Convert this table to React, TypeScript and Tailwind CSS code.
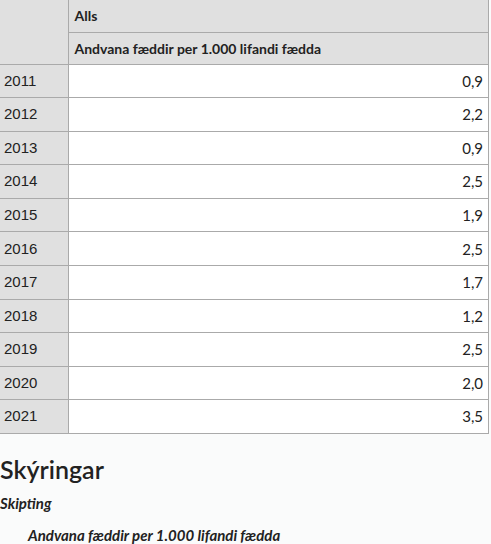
import React from "react";

const rows: [string, string][] = [
  ["2011", "0,9"],
  ["2012", "2,2"],
  ["2013", "0,9"],
  ["2014", "2,5"],
  ["2015", "1,9"],
  ["2016", "2,5"],
  ["2017", "1,7"],
  ["2018", "1,2"],
  ["2019", "2,5"],
  ["2020", "2,0"],
  ["2021", "3,5"],
];

export default function App() {
  return (
    <div className="h-[544px] overflow-hidden w-[491px] bg-[#fafbfb] text-[#222]" style={{ fontFamily: "Lato, 'Liberation Sans', sans-serif" }}>
      <table className="w-[489px] border-collapse table-fixed">
        <colgroup>
          <col className="w-[68px]" />
          <col />
        </colgroup>
        <thead>
          <tr className="h-[32px]">
            <th rowSpan={2} className="bg-[#e0e0e0] border-r border-b border-[#aaaaaa]"></th>
            <th className="bg-[#e0e0e0] border-b border-r border-[#aaaaaa] text-left pl-[6px] text-[14px] font-bold">Alls</th>
          </tr>
          <tr className="h-[32px]">
            <th className="bg-[#e0e0e0] border-b border-r border-[#aaaaaa] text-left pl-[6px] text-[14px] font-bold">Andvana fæddir per 1.000 lifandi fædda</th>
          </tr>
        </thead>
        <tbody>
          {rows.map(([y, v]) => (
            <tr key={y} className="h-[33.6px]">
              <td className="bg-[#e0e0e0] border-b border-r border-[#aaaaaa] pl-[4px] text-[15px]" style={{ fontFamily: "'Liberation Sans', sans-serif" }}>{y}</td>
              <td className="bg-white border-b border-r border-[#aaaaaa] text-right pr-[5px] text-[15px]" style={{ fontFamily: "Lato, sans-serif" }}>{v}</td>
            </tr>
          ))}
        </tbody>
      </table>
      <h2 className="mt-[20px] text-[25px] font-semibold leading-[30px] text-[#222]">Skýringar</h2>
      <p className="mt-[9px] text-[15px] italic font-bold leading-[20px]">Skipting</p>
      <p className="mt-[12px] pl-[28px] text-[15px] italic font-bold leading-[20px]">Andvana fæddir per 1.000 lifandi fædda</p>
    </div>
  );
}
